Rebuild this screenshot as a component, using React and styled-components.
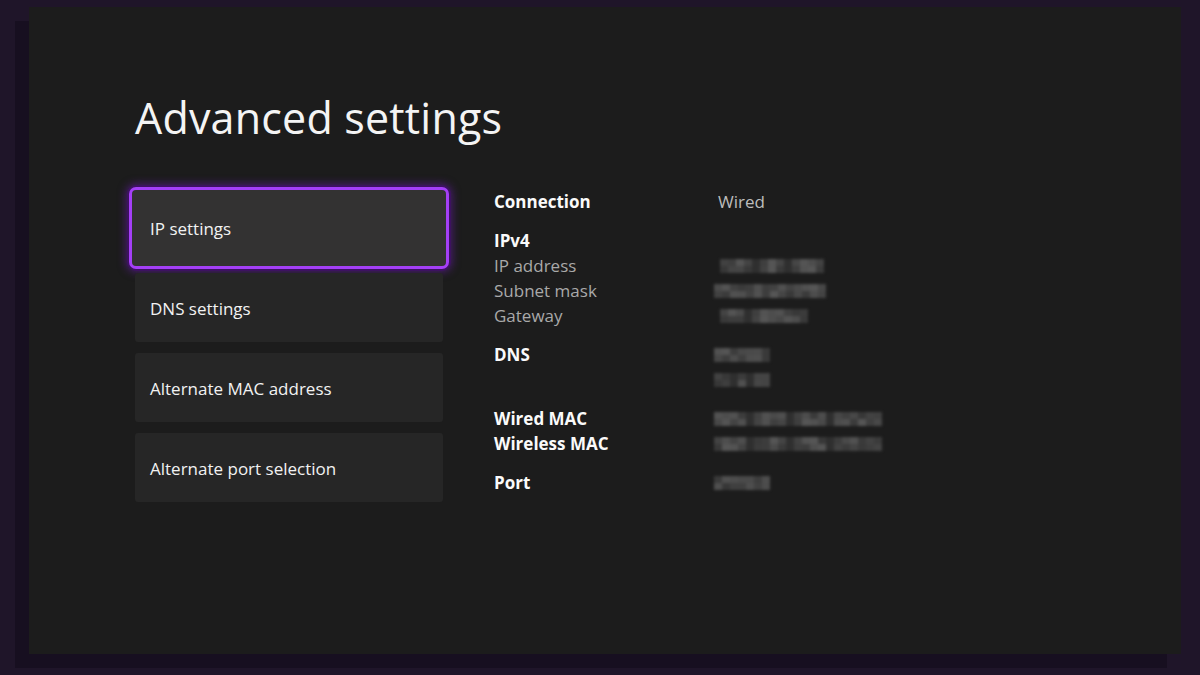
import React from 'react'
import styled, { createGlobalStyle } from 'styled-components'

const GlobalStyle = createGlobalStyle`
    html, body {
        margin: 0;
        padding: 0;
        background: #1f1529;
    }
    body {
        font-family: "Open Sans", "Noto Sans", sans-serif;
        color: #fff;
    }
`

const menuItems = ['IP settings', 'DNS settings', 'Alternate MAC address', 'Alternate port selection']

// pseudo random greys for the blurred values
function shades(count, seed) {
    const out = []
    let s = seed
    for (let i = 0; i < count; i++) {
        s = (s * 9301 + 49297) % 233280
        out.push(s / 233280)
    }
    return out
}

function Mosaic({ cols, seed, gaps = [] }) {
    const top = shades(cols, seed)
    const bottom = shades(cols, seed + 17)
    return (
        <MosaicBox>
            {[top, bottom].map((line, r) => (
                <MosaicRow key={r}>
                    {line.map((v, i) => (
                        <Cell key={i} $shade={gaps.includes(i) ? 0.3 : 0.45 + v * 0.55} />
                    ))}
                </MosaicRow>
            ))}
        </MosaicBox>
    )
}

function App() {
    return (
        <>
            <GlobalStyle />
            <Frame>
                <Panel>
                    <Title>Advanced settings</Title>
                    <Content>
                        <Menu>
                            {menuItems.map((label, i) => (
                                <MenuItem key={label} $focused={i === 0}>{label}</MenuItem>
                            ))}
                        </Menu>
                        <Details>
                            <Group>
                                <Row>
                                    <Label>Connection</Label>
                                    <Value>Wired</Value>
                                </Row>
                            </Group>
                            <Group>
                                <Row>
                                    <Label>IPv4</Label>
                                </Row>
                                <Row>
                                    <SubLabel>IP address</SubLabel>
                                    <BlurValue $shift={6}><Mosaic cols={13} seed={3} gaps={[4, 8]} /></BlurValue>
                                </Row>
                                <Row>
                                    <SubLabel>Subnet mask</SubLabel>
                                    <BlurValue><Mosaic cols={14} seed={11} /></BlurValue>
                                </Row>
                                <Row>
                                    <SubLabel>Gateway</SubLabel>
                                    <BlurValue $shift={6}><Mosaic cols={11} seed={29} gaps={[3]} /></BlurValue>
                                </Row>
                            </Group>
                            <Group>
                                <Row>
                                    <Label>DNS</Label>
                                    <BlurValue><Mosaic cols={7} seed={41} /></BlurValue>
                                </Row>
                                <Row>
                                    <Label />
                                    <BlurValue><Mosaic cols={7} seed={53} gaps={[2, 4]} /></BlurValue>
                                </Row>
                            </Group>
                            <Group>
                                <Row>
                                    <Label>Wired MAC</Label>
                                    <BlurValue><Mosaic cols={21} seed={67} gaps={[4, 9, 14]} /></BlurValue>
                                </Row>
                                <Row>
                                    <Label>Wireless MAC</Label>
                                    <BlurValue><Mosaic cols={21} seed={79} gaps={[4, 9, 14]} /></BlurValue>
                                </Row>
                            </Group>
                            <Group>
                                <Row>
                                    <Label>Port</Label>
                                    <BlurValue><Mosaic cols={7} seed={97} /></BlurValue>
                                </Row>
                            </Group>
                        </Details>
                    </Content>
                </Panel>
            </Frame>
        </>
    )
}

export default App

const Frame = styled.div`
    width: 1200px;
    height: 675px;
    box-sizing: border-box;
    padding: 7px 19px 21px 29px;
    overflow: hidden;
`

const Panel = styled.div`
    width: 1152px;
    height: 647px;
    background: #1c1c1c;
    box-shadow: -14px 14px 0 #170f20;
    box-sizing: border-box;
    padding: 89px 0 0 106px;
`

const Title = styled.h1`
    margin: 0;
    font-size: 43px;
    line-height: 43px;
    font-weight: 400;
    color: #f4f4f4;
    letter-spacing: 0.2px;
`

const Content = styled.div`
    display: flex;
    align-items: flex-start;
    gap: 51px;
    margin-top: 49px;
`

const Menu = styled.div`
    display: flex;
    flex-direction: column;
    gap: 11px;
    width: 308px;
    padding-top: 5px;
`

const MenuItem = styled.div`
    display: flex;
    align-items: center;
    box-sizing: border-box;
    height: ${p => (p.$focused ? '82px' : '69px')};
    margin: ${p => (p.$focused ? '-6px -6px -7px -6px' : '0')};
    padding-left: ${p => (p.$focused ? '18px' : '15px')};
    padding-top: ${p => (p.$focused ? '0' : '2px')};
    background: ${p => (p.$focused ? '#333232' : '#262626')};
    border: ${p => (p.$focused ? '3px solid #a43ff7' : 'none')};
    border-radius: ${p => (p.$focused ? '7px' : '3px')};
    box-shadow: ${p => (p.$focused ? '0 0 0 2px #3d1260, 0 0 9px 3px rgba(120, 30, 200, 0.5)' : 'none')};
    font-size: 17px;
    color: #f2f2f2;
`

const Details = styled.div`
    display: flex;
    flex-direction: column;
    gap: 14px;
    padding-top: 1px;
`

const Group = styled.div`
    display: flex;
    flex-direction: column;
`

const Row = styled.div`
    display: flex;
    align-items: center;
    height: 25px;
`

const Label = styled.div`
    width: 224px;
    font-size: 17px;
    font-weight: 700;
    color: #fafafa;
`

const SubLabel = styled.div`
    width: 224px;
    font-size: 17px;
    color: #a9a9a9;
`

const Value = styled.div`
    font-size: 17px;
    color: #bdbdbd;
`

const BlurValue = styled.div`
    margin-left: ${p => (p.$shift ? p.$shift - 4 : -4)}px;
`

const MosaicBox = styled.div`
    display: flex;
    flex-direction: column;
    filter: blur(1.8px);
`

const MosaicRow = styled.div`
    display: flex;
`

const Cell = styled.span`
    width: 8px;
    height: 7px;
    background: ${p => {
        const g = Math.round(30 + p.$shade * 56)
        return `rgb(${g}, ${g}, ${g})`
    }};
`
